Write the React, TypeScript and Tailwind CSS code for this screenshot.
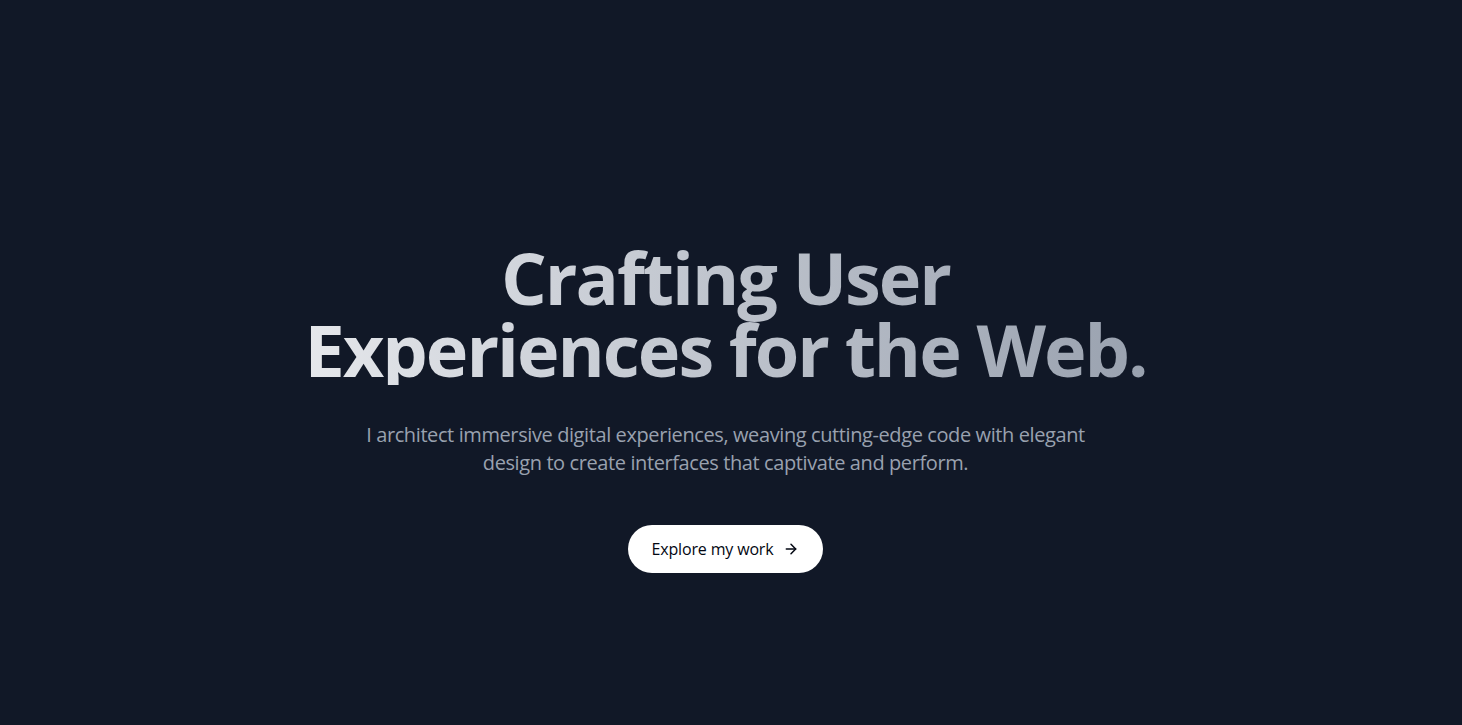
import { ArrowRight } from 'lucide-react'

export default function App() {
  return (
    <div className="min-h-screen bg-[#111827] flex flex-col items-center text-center pl-6 pr-[35px] pt-[241px] font-['Open_Sans',sans-serif]">
      <h1 className="text-[72px] leading-[72px] font-bold tracking-[-0.028em] bg-gradient-to-r from-gray-200 to-gray-400 bg-clip-text text-transparent">
        Crafting User
        <br />
        Experiences for the Web.
      </h1>
      <p className="mt-9 max-w-[760px] text-xl leading-7 tracking-[-0.02em] text-gray-400">
        I architect immersive digital experiences, weaving cutting-edge code with elegant design to create
        interfaces that captivate and perform.
      </p>
      <button className="mt-12 h-12 px-6 rounded-full bg-white text-gray-950 text-base font-medium tracking-[-0.01em] flex items-center gap-2.5">
        Explore my work
        <ArrowRight className="w-4 h-4" strokeWidth={2.25} />
      </button>
    </div>
  )
}
